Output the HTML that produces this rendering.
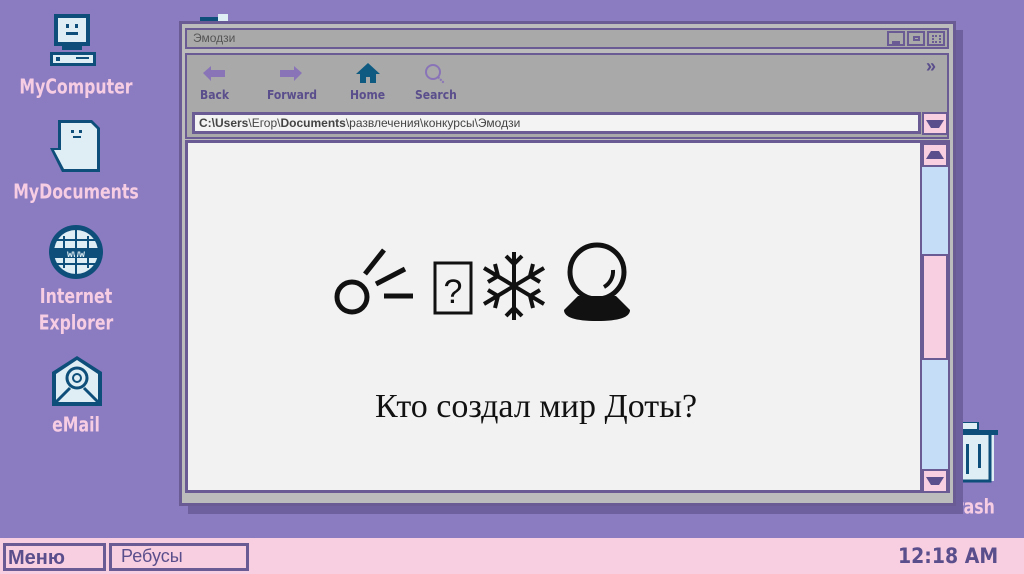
<!DOCTYPE html>
<html><head><meta charset="utf-8"><style>
*{margin:0;padding:0;box-sizing:border-box}
body{width:1024px;height:574px;background:#8b7bc0;position:relative;overflow:hidden;font-family:"Liberation Sans","Noto Sans CJK SC",sans-serif}
.a{position:absolute}
.lbl{position:absolute;color:#f6cde3;font-weight:bold;font-family:"DejaVu Sans Condensed","Liberation Sans",sans-serif;font-size:17.5px;text-align:center;line-height:23px;transform:scaleY(1.15)}
.tb{position:absolute;color:#5b4e8c;font-weight:bold;font-size:12px;font-family:"DejaVu Sans Condensed","Liberation Sans",sans-serif}
</style></head><body>
<svg class="a" style="left:48px;top:12px" width="52" height="56" viewBox="0 0 52 56">
<rect x="6" y="2" width="36" height="32" fill="#0e4e7a"/><rect x="10" y="6" width="28" height="24" fill="#dfeef4"/>
<rect x="18" y="12" width="3" height="4" fill="#0e4e7a"/><rect x="27" y="12" width="3" height="4" fill="#0e4e7a"/><rect x="18" y="20" width="12" height="3" fill="#0e4e7a"/>
<rect x="14" y="34" width="20" height="4" fill="#0e4e7a"/><rect x="2" y="40" width="46" height="14" fill="#0e4e7a"/><rect x="5" y="43" width="40" height="8" fill="#dfeef4"/>
<rect x="8" y="45" width="4" height="4" fill="#0e4e7a"/><rect x="28" y="45" width="13" height="2" fill="#0e4e7a"/></svg>
<div class="lbl" style="left:10px;top:77px;width:132px">MyComputer</div>
<svg class="a" style="left:48px;top:118px" width="56" height="56" viewBox="0 0 56 56">
<path d="M10 2h34l8 8v44H14l-12-24h8z" fill="#0e4e7a"/><path d="M13 5h30l6 6v40H16L6 32h7z" fill="#dfeef4"/>
<rect x="23" y="12" width="3" height="3" fill="#0e4e7a"/><rect x="31" y="12" width="3" height="3" fill="#0e4e7a"/><rect x="25" y="18" width="8" height="2" fill="#0e4e7a"/></svg>
<div class="lbl" style="left:6px;top:182px;width:140px">MyDocuments</div>
<svg class="a" style="left:48px;top:224px" width="56" height="56" viewBox="0 0 56 56">
<circle cx="28" cy="28" r="27" fill="#0e4e7a"/><circle cx="28" cy="28" r="22" fill="#dfeef4"/>
<path d="M6 24h44v10H6z" fill="#0e4e7a"/><text x="28" y="33" fill="#dfeef4" font-size="10" font-weight="bold" text-anchor="middle" font-family="Liberation Mono">www</text>
<path d="M28 6v44M16 12v32M40 12v32M8 16h40M8 40h40" stroke="#0e4e7a" stroke-width="2"/></svg>
<div class="lbl" style="left:10px;top:288px;width:132px">Internet<br>Explorer</div>
<svg class="a" style="left:50px;top:354px" width="54" height="54" viewBox="0 0 54 54">
<path d="M2 18L27 2l25 16v34H2z" fill="#0e4e7a"/><path d="M6 20L27 6l21 14v28H6z" fill="#dfeef4"/>
<circle cx="27" cy="24" r="10" fill="none" stroke="#0e4e7a" stroke-width="3"/><circle cx="27" cy="24" r="4" fill="none" stroke="#0e4e7a" stroke-width="2"/>
<path d="M6 48l14-14M48 48L34 34" stroke="#0e4e7a" stroke-width="3"/></svg>
<div class="lbl" style="left:10px;top:415px;width:132px">eMail</div>
<svg class="a" style="left:200px;top:12px" width="30" height="10"><rect x="0" y="5" width="20" height="5" fill="#0e4e7a"/><rect x="18" y="2" width="10" height="8" fill="#dfeef4"/></svg>
<svg class="a" style="left:950px;top:422px" width="50" height="66" viewBox="0 0 50 66">
<rect x="8" y="0" width="20" height="8" fill="#dfeef4" stroke="#0e4e7a" stroke-width="2"/><rect x="4" y="8" width="44" height="5" fill="#0e4e7a"/>
<path d="M6 13h38v46H8z" fill="#dfeef4"/><path d="M40 13v46H8" fill="none" stroke="#0e4e7a" stroke-width="3"/>
<rect x="16" y="22" width="3" height="30" fill="#0e4e7a"/><rect x="28" y="22" width="3" height="24" fill="#0e4e7a"/></svg>
<div class="lbl" style="left:938px;top:497px;width:66px">Trash</div>
<div class="a" style="left:188px;top:30px;width:775px;height:484px;background:#6e5f9e"></div>
<div class="a" style="left:179px;top:21px;width:777px;height:485px;background:#bcbcbc;border:3px solid #6b5b95"></div>
<div class="a" style="left:185px;top:28px;width:764px;height:21px;background:#a9a9a9;border:2px solid #6b5b95"></div>
<div class="a" style="left:193px;top:31px;font-size:12px;color:#555">Эмодзи</div>
<div class="a" style="left:887px;top:31px;width:18px;height:15px;border:2px solid #6b5b95"><div class="a" style="left:3px;top:8px;width:8px;height:3px;background:#6b5b95"></div></div>
<div class="a" style="left:907px;top:31px;width:18px;height:15px;border:2px solid #6b5b95"><div class="a" style="left:4px;top:3px;width:7px;height:5px;border:2px solid #6b5b95"></div></div>
<div class="a" style="left:927px;top:31px;width:18px;height:15px;border:2px solid #6b5b95"><div class="a" style="left:3px;top:2px;width:9px;height:8px;border:2px dotted #6b5b95"></div></div>
<div class="a" style="left:185px;top:53px;width:764px;height:86px;background:#a9a9a9;border:2px solid #6b5b95"></div>
<div class="a" style="left:926px;top:56px;color:#5b4e8c;font-size:18px;font-weight:bold">»</div>
<svg class="a" style="left:201px;top:64px" width="26" height="20"><path d="M2 9l8-7v4h14v7H10v4z" fill="#8a74b8"/></svg>
<svg class="a" style="left:278px;top:64px" width="26" height="20"><path d="M24 9l-8-7v4H2v7h14v4z" fill="#8a74b8"/></svg>
<svg class="a" style="left:355px;top:62px" width="26" height="22"><path d="M13 1L1 12h4v9h6v-6h4v6h6v-9h4z" fill="#0e5a80"/></svg>
<svg class="a" style="left:421px;top:62px" width="28" height="24"><circle cx="12" cy="10" r="7" fill="none" stroke="#8a74b8" stroke-width="2"/><path d="M17 15l6 6" stroke="#8a74b8" stroke-width="2" stroke-dasharray="2 1"/></svg>
<div class="tb" style="left:200px;top:88px">Back</div>
<div class="tb" style="left:267px;top:88px">Forward</div>
<div class="tb" style="left:350px;top:88px">Home</div>
<div class="tb" style="left:415px;top:88px">Search</div>
<div class="a" style="left:192px;top:112px;width:729px;height:22px;background:#f3f3f3;border:3px solid #6b5b95"></div>
<div class="a" style="left:199px;top:116px;font-size:12px;color:#444;white-space:nowrap"><b>C:\Users</b>\Егор\<b>Documents</b>\развлечения\конкурсы\Эмодзи</div>
<div class="a" style="left:922px;top:112px;width:26px;height:23px;background:#f7cfe0;border:2px solid #6b5b95"><svg width="22" height="19"><path d="M2 6h18l-5 8H7z" fill="#5b4e8c"/></svg></div>
<div class="a" style="left:185px;top:140px;width:765px;height:353px;border:3px solid #6b5b95;background:#f2f2f2"></div>
<div class="a" style="left:920px;top:143px;width:28px;height:347px;background:#c5ddf7;border-left:2px solid #6b5b95"></div>
<div class="a" style="left:922px;top:143px;width:26px;height:24px;background:#f7cfe0;border:2px solid #6b5b95"><svg width="22" height="20"><path d="M2 14h18l-5-8H7z" fill="#5b4e8c"/></svg></div>
<div class="a" style="left:922px;top:254px;width:26px;height:106px;background:#f7cfe0;border:2px solid #6b5b95"></div>
<div class="a" style="left:922px;top:469px;width:26px;height:24px;background:#f7cfe0;border:2px solid #6b5b95"><svg width="22" height="20"><path d="M2 6h18l-5 8H7z" fill="#5b4e8c"/></svg></div>
<svg class="a" style="left:330px;top:240px" width="310" height="90" viewBox="0 0 310 90">
<g stroke="#111" stroke-width="5" fill="none">
<circle cx="22" cy="57" r="15"/><path d="M35 34l19-24M46 44l29-15M54 56h29"/>
<rect x="105" y="23" width="36" height="50" stroke-width="3"/>
<path d="M184 12v68M154 28l60 36M154 64l60-36M176 16l8 8 8-8M176 76l8-8 8 8M158 42l10-6-3-12M210 42l-10-6 3-12M158 50l10 6-3 12M210 50l-10 6 3 12" stroke-width="4"/>
<circle cx="267" cy="32" r="27" stroke-width="5"/><path d="M283 30a18 18 0 0 1-9 17" stroke-width="4"/>
</g>
<text x="123" y="63" font-size="34" text-anchor="middle" fill="#111" font-family="Liberation Sans">?</text>
<path d="M248 56h38l14 14q0 11-33 11t-33-11z" fill="#111"/>
</svg>
<div class="a" style="left:186px;top:388px;width:700px;text-align:center;font-family:'Liberation Serif',serif;font-size:34px;color:#111">Кто создал мир Доты?</div>
<div class="a" style="left:0;top:538px;width:1024px;height:36px;background:#f7cfe0"></div>
<div class="a" style="left:3px;top:543px;width:103px;height:28px;border:3px solid #6b5b95;font-weight:bold;font-size:20px;color:#5b4e8c;line-height:24px;padding-left:2px">Меню</div>
<div class="a" style="left:109px;top:543px;width:140px;height:28px;border:3px solid #6b5b95;font-size:18px;color:#5b4e8c;line-height:20px;padding-left:9px">Ребусы</div>
<div class="a" style="left:898px;top:544px;font-weight:bold;font-size:21px;color:#5b4e8c;font-family:'DejaVu Sans Condensed','Liberation Sans',sans-serif">12:18 AM</div>
</body></html>
